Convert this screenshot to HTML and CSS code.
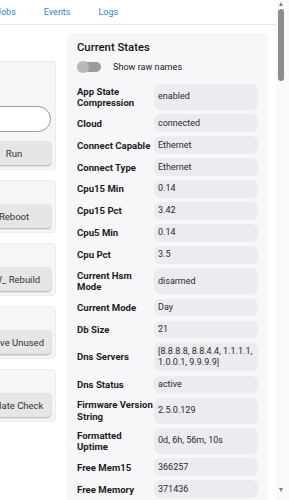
FILE: index.html
```html
<!DOCTYPE html>
<html lang="en">
<head>
<meta charset="utf-8">
<title>Device</title>
<link rel="stylesheet" href="styles.css">
</head>
<body>
<div class="frame">
  <div class="main">
    <nav class="nav">
      <a class="nav-link">Jobs</a>
      <a class="nav-link">Events</a>
      <a class="nav-link">Logs</a>
    </nav>
    <div class="content">
      <div class="cmds">
        <div class="cmd cmd-first">
          <input class="field" type="text">
          <button class="btn">Run</button>
        </div>
        <div class="cmd"><button class="btn">Reboot</button></div>
        <div class="cmd"><button class="btn">ZW_ Rebuild</button></div>
        <div class="cmd"><button class="btn">Remove Unused</button></div>
        <div class="cmd"><button class="btn">Update Check</button></div>
      </div>
      <section class="states">
        <h2 class="title">Current States</h2>
        <div class="toggle-row">
          <span class="switch"><span class="knob"></span></span>
          <span class="toggle-label">Show raw names</span>
        </div>
        <div class="grid">
          <div class="lbl">App State Compression</div><div class="val">enabled</div>
          <div class="lbl">Cloud</div><div class="val">connected</div>
          <div class="lbl">Connect Capable</div><div class="val">Ethernet</div>
          <div class="lbl">Connect Type</div><div class="val">Ethernet</div>
          <div class="lbl">Cpu15 Min</div><div class="val">0.14</div>
          <div class="lbl">Cpu15 Pct</div><div class="val">3.42</div>
          <div class="lbl">Cpu5 Min</div><div class="val">0.14</div>
          <div class="lbl">Cpu Pct</div><div class="val">3.5</div>
          <div class="lbl">Current Hsm Mode</div><div class="val">disarmed</div>
          <div class="lbl">Current Mode</div><div class="val">Day</div>
          <div class="lbl">Db Size</div><div class="val">21</div>
          <div class="lbl">Dns Servers</div><div class="val">[8.8.8.8, 8.8.4.4, 1.1.1.1, 1.0.0.1, 9.9.9.9]</div>
          <div class="lbl">Dns Status</div><div class="val">active</div>
          <div class="lbl">Firmware Version String</div><div class="val">2.5.0.129</div>
          <div class="lbl">Formatted Uptime</div><div class="val">0d, 6h, 56m, 10s</div>
          <div class="lbl">Free Mem15</div><div class="val">366257</div>
          <div class="lbl">Free Memory</div><div class="val">371436</div>
        </div>
      </section>
    </div>
  </div>
  <div class="scrollbar">
    <span class="arrow-up"></span>
    <span class="thumb"></span>
    <span class="track-fill"></span>
    <span class="arrow-down"></span>
  </div>
</div>
</body>
</html>
```
FILE: styles.css
```css
html, body {
  margin: 0;
  padding: 0;
  height: 500px;
  overflow: hidden;
  background: #ffffff;
}
body {
  font-family: Roboto, "Noto Sans", Arial, sans-serif;
  color: #222;
}
.frame {
  display: flex;
  width: 289px;
  height: 500px;
  overflow: hidden;
}
.main {
  width: 276px;
  flex: none;
  overflow: hidden;
}
.nav {
  height: 24px;
  border-bottom: 1px solid #e8e8e8;
  display: flex;
  align-items: center;
  gap: 28px;
  margin-left: -4px;
}
.nav-link {
  color: #2f82d6;
  font-size: 9px;
  line-height: 12px;
  text-decoration: none;
}
.content {
  display: flex;
  align-items: flex-start;
  gap: 11px;
  padding: 8px 8px 0 0;
}
.cmds {
  flex: none;
  width: 120px;
  margin-left: -64px;
  padding-top: 28px;
  display: flex;
  flex-direction: column;
  gap: 10px;
}
.cmd {
  background: #f6f6f6;
  border: 1px solid #ececec;
  border-radius: 4px;
  padding: 23px 4px 4px;
  display: flex;
  flex-direction: column;
  align-items: flex-end;
}
.cmd-first {
  padding-top: 44px;
}
.field {
  box-sizing: border-box;
  width: 100%;
  height: 26px;
  margin: 0 0 9px;
  border: 1px solid #9a9a9a;
  border-radius: 13px;
  background: #ffffff;
  outline: none;
}
.btn {
  min-width: 74px;
  height: 24px;
  padding: 0 7px;
  border: none;
  border-radius: 4px;
  background: #e6e6e6;
  box-shadow: 0 1px 2px rgba(0,0,0,0.3);
  font-family: Roboto, "Noto Sans", Arial, sans-serif;
  font-size: 9.5px;
  color: #333;
  white-space: nowrap;
  text-align: center;
}
.states {
  flex: 1;
  min-width: 0;
  background: #f7f7fa;
  border-radius: 4px;
  padding: 7px 10px 10px;
}
.title {
  margin: 0;
  font-size: 11.3px;
  line-height: 15px;
  font-weight: 500;
  color: #111;
}
.toggle-row {
  margin-top: 5px;
  height: 14px;
  display: flex;
  align-items: center;
  gap: 12px;
}
.switch {
  width: 24px;
  height: 10px;
  border-radius: 5px;
  background: #9c9c9c;
  display: flex;
  align-items: center;
  flex: none;
}
.knob {
  width: 12px;
  height: 12px;
  border-radius: 50%;
  background: #b9b9b9;
  flex: none;
}
.toggle-label {
  font-size: 9.1px;
  color: #222;
}
.grid {
  margin-top: 10px;
  display: grid;
  grid-template-columns: 76px 104px;
  column-gap: 1px;
  row-gap: 4.4px;
}
.lbl {
  align-self: center;
  font-size: 9.6px;
  line-height: 11.2px;
  font-weight: 700;
  color: #1c1c1c;
  padding: 1.8px 0;
}
.val {
  background: #ebebf0;
  border-radius: 6px;
  padding: 3.2px 3px 3.2px 4px;
  font-size: 9px;
  line-height: 11.2px;
  color: #2a2a2a;
  display: flex;
  align-items: center;
}
.scrollbar {
  flex: none;
  width: 13px;
  height: 500px;
  background: #fafafa;
  display: flex;
  flex-direction: column;
  align-items: flex-start;
}
.arrow-up {
  margin: 2px 0 0 3px;
  width: 0;
  height: 0;
  border-left: 2.5px solid transparent;
  border-right: 2.5px solid transparent;
  border-bottom: 4px solid #808080;
}
.thumb {
  margin: 3px 0 0 2px;
  width: 6px;
  height: 72px;
  border-radius: 3px;
  background: #8d8d8d;
}
.track-fill {
  flex: 1;
}
.arrow-down {
  margin: 0 0 8px 3px;
  width: 0;
  height: 0;
  border-left: 2.5px solid transparent;
  border-right: 2.5px solid transparent;
  border-top: 4px solid #808080;
}
```
